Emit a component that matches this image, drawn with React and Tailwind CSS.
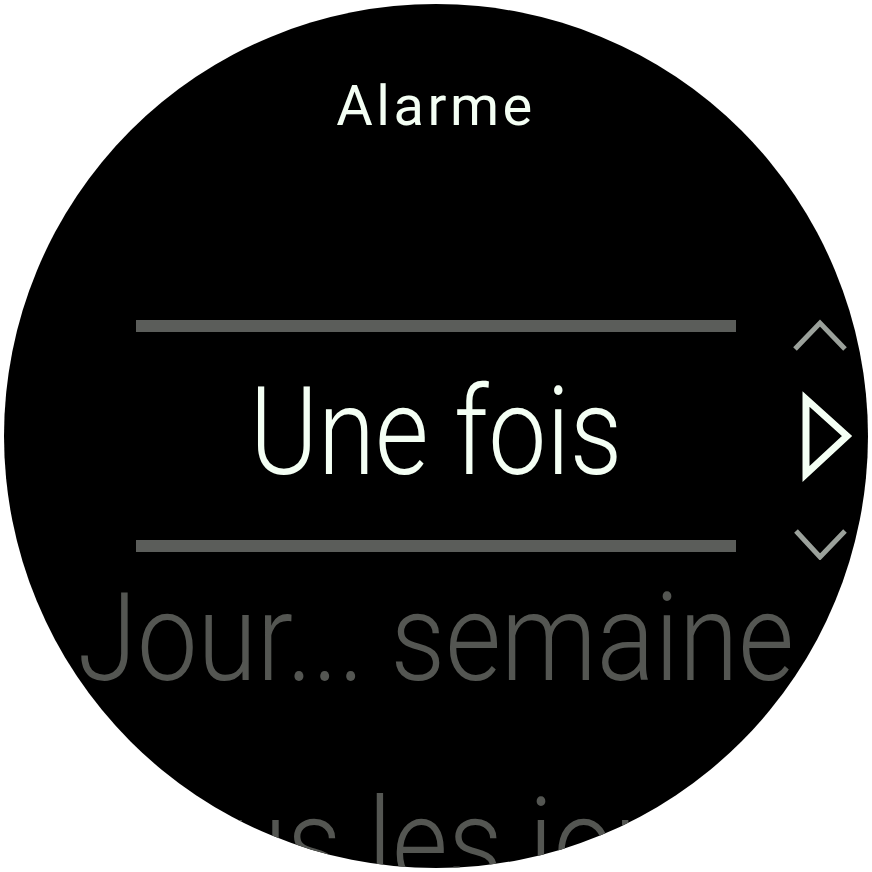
import React from 'react'

const items = ['Une fois', 'Jour... semaine', 'Tous les jours']

const ScrollHint = () => (
  <svg width="70" height="250" viewBox="0 0 70 250" className="absolute left-[781px] top-[306px]">
    {/* up chevron */}
    <polyline points="10,39 35,13 60,39" fill="none" stroke="#9ba19b" strokeWidth="5" />
    {/* play triangle */}
    <polygon points="21,89 21,164 62,126" fill="none" stroke="#f4fff4" strokeWidth="7" strokeLinejoin="miter" />
    {/* down chevron */}
    <polyline points="11,221 35,247 60,221" fill="none" stroke="#9ba19b" strokeWidth="5" />
  </svg>
)

export default function App() {
  return (
    <div className="w-[872px] h-[872px] bg-white overflow-hidden" style={{ fontFamily: 'Roboto, "Noto Sans", sans-serif' }}>
      <div className="relative ml-[4px] mt-[4px] w-[864px] h-[864px] rounded-full bg-black overflow-hidden flex flex-col items-center">
        <div className="shrink-0 pt-[74px] h-[316px] text-[56px] leading-[56px] tracking-[3.5px] text-[#f4fff4]">
          Alarme
        </div>

        <div className="shrink-0 w-[600px] h-[12px] bg-[#5b5d5a]" />
        <div className="shrink-0 h-[208px] flex justify-center">
          <span className="block whitespace-nowrap text-[122px] leading-[202px] font-light text-[#f4fff4] scale-x-[0.85]">
            {items[0]}
          </span>
        </div>
        <div className="shrink-0 w-[600px] h-[12px] bg-[#5b5d5a]" />

        <div className="shrink-0 flex justify-center">
          <span className="block whitespace-nowrap text-[122px] leading-[173px] font-light text-[#545652] scale-x-[0.885]">
            {items[1]}
          </span>
        </div>
        <div className="shrink-0 flex justify-center">
          <span className="block whitespace-nowrap text-[122px] leading-[237px] font-light text-[#545652] scale-x-[0.885]">
            {items[2]}
          </span>
        </div>

        <ScrollHint />
      </div>
    </div>
  )
}
